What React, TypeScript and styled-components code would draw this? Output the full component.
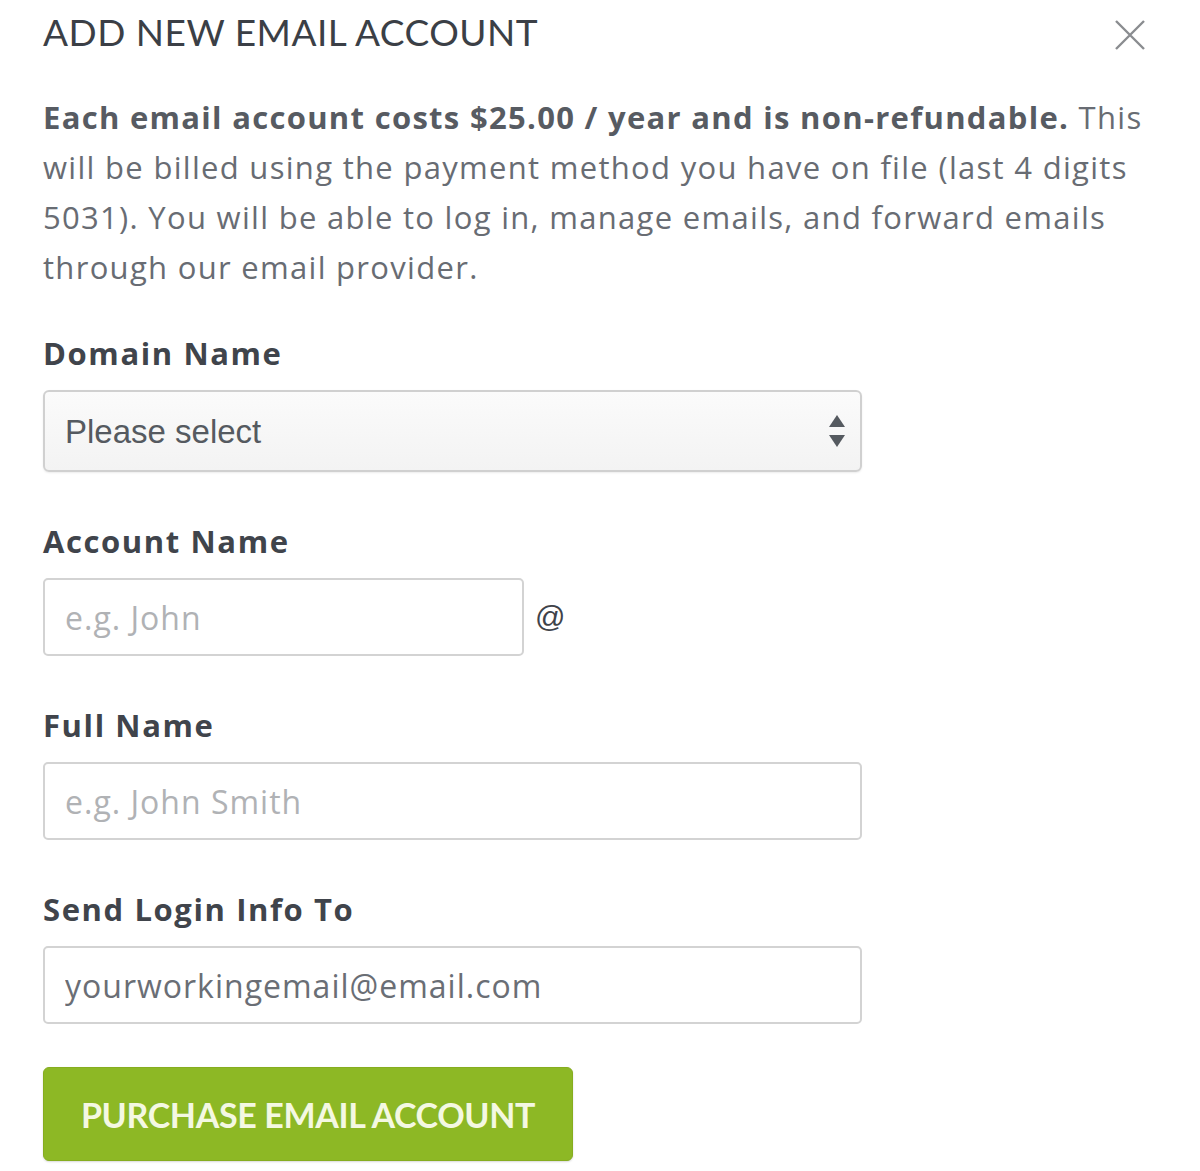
import React from "react";
import styled, { createGlobalStyle } from "styled-components";

const GlobalStyle = createGlobalStyle`
  html, body {
    margin: 0;
    padding: 0;
    background: #ffffff;
  }
  * {
    box-sizing: border-box;
  }
`;

const Modal = styled.div`
  width: 1200px;
  min-height: 1171px;
  padding: 10px 40px 0 43px;
  background: #ffffff;
  display: flex;
  flex-direction: column;
`;

const Header = styled.div`
  display: flex;
  justify-content: space-between;
  align-items: flex-start;
  padding-right: 15px;
`;

const Title = styled.h1`
  margin: 0;
  font-family: Lato, "Open Sans", sans-serif;
  font-weight: 400;
  font-size: 37px;
  line-height: 44px;
  color: #3b3f46;
  letter-spacing: 0.5px;
`;

const CloseButton = styled.button`
  width: 30px;
  height: 30px;
  margin-top: 10px;
  padding: 0;
  border: none;
  background: none;
  cursor: pointer;
  display: flex;
  align-items: center;
  justify-content: center;
`;

const Intro = styled.p`
  margin: 38px 0 0;
  font-family: "Open Sans", sans-serif;
  font-size: 31px;
  line-height: 50px;
  letter-spacing: 1.3px;
  color: #686c73;

  strong {
    font-weight: 700;
    color: #575b62;
  }
`;

const Form = styled.form`
  margin-top: 41px;
  display: flex;
  flex-direction: column;
  gap: 49px;
`;

const Field = styled.div`
  display: flex;
  flex-direction: column;
  gap: 17px;
`;

const Label = styled.label`
  font-family: "Open Sans", sans-serif;
  font-weight: 700;
  font-size: 31px;
  line-height: 40px;
  letter-spacing: 1.6px;
  color: #40444b;
`;

const SelectBox = styled.div`
  position: relative;
  width: 819px;
  height: 82px;
`;

const Select = styled.select`
  width: 100%;
  height: 100%;
  appearance: none;
  padding: 0 60px 0 20px;
  border: 2px solid #d0d0d0;
  border-radius: 6px;
  background: linear-gradient(#fbfbfb, #f3f3f3);
  font-family: "Liberation Sans", Arial, sans-serif;
  font-size: 33px;
  color: #555a60;
  box-shadow: 0 1px 2px rgba(0, 0, 0, 0.08);
`;

const Arrows = styled.svg`
  position: absolute;
  right: 16px;
  top: 50%;
  transform: translateY(-50%);
  pointer-events: none;
`;

const InputRow = styled.div`
  display: flex;
  align-items: center;
  gap: 11px;
`;

const Input = styled.input<{ $width: number }>`
  width: ${(p) => p.$width}px;
  height: 78px;
  padding: 0 20px;
  border: 2px solid #d3d3d3;
  border-radius: 5px;
  background: #ffffff;
  font-family: "Open Sans", sans-serif;
  font-size: 32px;
  letter-spacing: 1px;
  color: #6a6e75;
  outline: none;

  &::placeholder {
    color: #b0b2b5;
  }
`;

const AtSign = styled.span`
  font-family: "Liberation Sans", Arial, sans-serif;
  font-size: 30px;
  color: #3f434a;
`;

const PurchaseButton = styled.button`
  align-self: flex-start;
  margin-top: -6px;
  width: 530px;
  height: 94px;
  border: 1px solid #86ad1f;
  border-radius: 6px;
  background: #8db825;
  color: #f4f8e2;
  font-family: Lato, "Open Sans", sans-serif;
  font-weight: 700;
  font-size: 34px;
  letter-spacing: -0.35px;
  cursor: pointer;
  box-shadow: 0 1px 2px rgba(0, 0, 0, 0.15);
`;

export default function App() {
  return (
    <>
      <GlobalStyle />
      <Modal>
        <Header>
          <Title>ADD NEW EMAIL ACCOUNT</Title>
          <CloseButton aria-label="Close">
            <svg width="30" height="30" viewBox="0 0 30 30">
              <path
                d="M1 1 L29 29 M29 1 L1 29"
                stroke="#8a8c90"
                strokeWidth="2.4"
                fill="none"
              />
            </svg>
          </CloseButton>
        </Header>
        <Intro>
          <strong>Each email account costs $25.00 / year and is non-refundable.</strong>{" "}
          This will be billed using the payment method you have on file (last 4
          digits 5031). You will be able to log in, manage emails, and forward
          emails through our email provider.
        </Intro>
        <Form onSubmit={(e) => e.preventDefault()}>
          <Field>
            <Label>Domain Name</Label>
            <SelectBox>
              <Select defaultValue="">
                <option value="">Please select</option>
              </Select>
              <Arrows width="18" height="34" viewBox="0 0 18 34">
                <path d="M9 1 L17 13 L1 13 Z" fill="#555a60" />
                <path d="M1 21 L17 21 L9 33 Z" fill="#555a60" />
              </Arrows>
            </SelectBox>
          </Field>
          <Field>
            <Label>Account Name</Label>
            <InputRow>
              <Input $width={481} placeholder="e.g. John" />
              <AtSign>@</AtSign>
            </InputRow>
          </Field>
          <Field>
            <Label>Full Name</Label>
            <Input $width={819} placeholder="e.g. John Smith" />
          </Field>
          <Field>
            <Label>Send Login Info To</Label>
            <Input $width={819} defaultValue="yourworkingemail@email.com" />
          </Field>
          <PurchaseButton type="submit">PURCHASE EMAIL ACCOUNT</PurchaseButton>
        </Form>
      </Modal>
    </>
  );
}
